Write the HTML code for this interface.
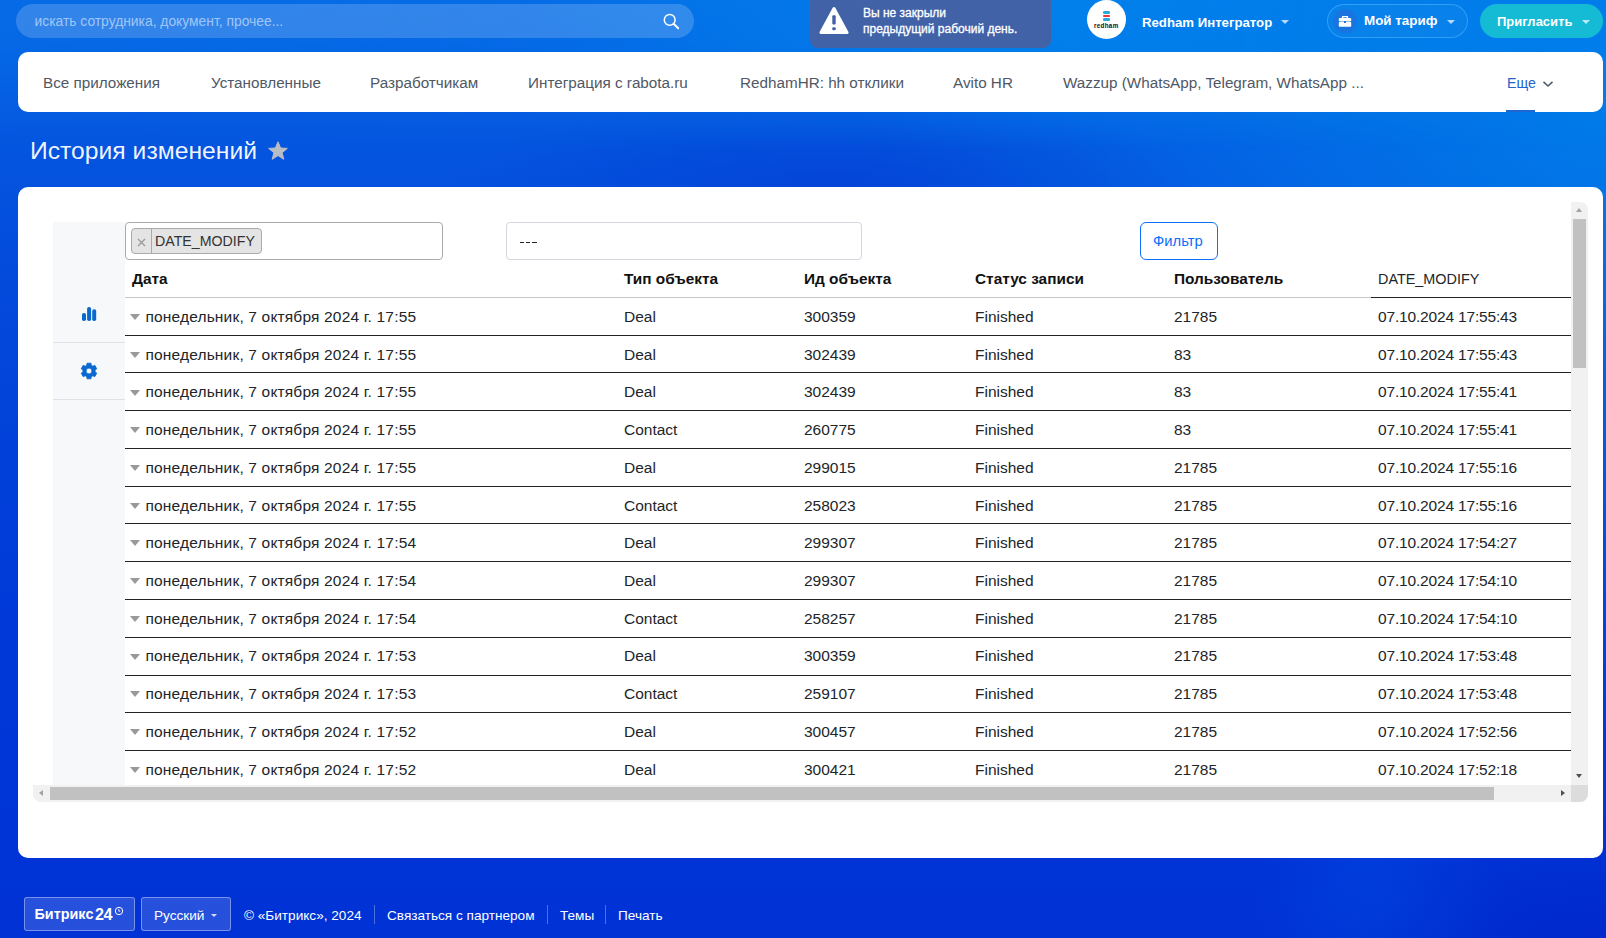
<!DOCTYPE html>
<html><head><meta charset="utf-8"><title>История изменений</title>
<style>
*{box-sizing:border-box;margin:0;padding:0}
html,body{width:1606px;height:938px;overflow:hidden}
body{font-family:"Liberation Sans",sans-serif;position:relative;background:#0550dc}
.t{position:absolute;white-space:nowrap}
.a{position:absolute}
</style></head><body>
<div class="a" style="left:0;top:0;width:1606px;height:938px;background:linear-gradient(180deg,#0a66e6 0px,#0556e0 130px,#0347da 330px,#0039d8 620px,#0032d6 938px)"></div>
<div class="a" style="left:0;top:0;width:1606px;height:938px;background:radial-gradient(ellipse 720px 640px at 1606px 120px,rgba(0,128,234,.85),rgba(0,128,234,.35) 55%,rgba(0,128,234,0) 100%)"></div>
<div class="a" style="left:0;top:0;width:1606px;height:938px;background:radial-gradient(ellipse 380px 90px at 830px 185px,rgba(0,50,205,.4),rgba(0,50,205,0))"></div>
<div class="a" style="left:0;top:0;width:1606px;height:938px;background:radial-gradient(ellipse 120px 120px at 1380px 900px,rgba(0,90,235,.3),rgba(0,90,235,0))"></div>
<div class="a" style="left:0;top:0;width:1606px;height:938px;background:radial-gradient(ellipse 300px 120px at 1606px 938px,rgba(0,25,190,.4),rgba(0,25,190,0))"></div>
<div class="a" style="left:0;top:0;width:1606px;height:160px;background:linear-gradient(90deg,rgba(0,118,230,.35) 0px,rgba(0,118,232,.42) 520px,rgba(0,134,236,.8) 1000px,rgba(0,128,236,.6) 1606px);-webkit-mask-image:linear-gradient(180deg,#000 0px,#000 45px,transparent 150px)"></div>
<div class="a" style="left:16px;top:4px;width:678px;height:34px;border-radius:17px;background:rgba(255,255,255,.18)"></div>
<div class="t" style="left:34.5px;top:15.08px;font-size:13.85px;line-height:13.85px;font-weight:normal;color:rgba(255,255,255,.55);">искать сотрудника, документ, прочее...</div>
<svg class="a" style="left:660px;top:11px" width="22" height="22" viewBox="0 0 22 22"><circle cx="9.7" cy="8.9" r="5.4" fill="none" stroke="#fff" stroke-width="1.5"/><line x1="13.6" y1="12.8" x2="18.2" y2="17.2" stroke="#fff" stroke-width="2" stroke-linecap="round"/></svg>
<div class="a" style="left:810px;top:-10px;width:241px;height:58px;border-radius:8px;background:#4262a8"></div>
<svg class="a" style="left:819px;top:6px" width="30" height="29" viewBox="0 0 30 29"><path d="M15 2.5 L28 26.5 L2 26.5 Z" fill="#fff" stroke="#fff" stroke-width="3" stroke-linejoin="round"/><rect x="13.3" y="9.3" width="3.4" height="9.2" rx="1" fill="#4262a8"/><rect x="13.3" y="21.2" width="3.4" height="3" rx="1" fill="#4262a8"/></svg>
<div class="t" style="left:863px;top:6.84px;font-size:12px;line-height:12px;font-weight:normal;color:#fff;-webkit-text-stroke:.3px #fff">Вы не закрыли</div>
<div class="t" style="left:863px;top:23.04px;font-size:12px;line-height:12px;font-weight:normal;color:#fff;-webkit-text-stroke:.3px #fff">предыдущий рабочий день.</div>
<div class="a" style="left:1087px;top:0px;width:39px;height:39px;border-radius:50%;background:#fff"></div>
<div class="a" style="left:1103px;top:11px;width:7px;height:2.6px;background:#2aa8e0;border-radius:1.3px"></div>
<div class="a" style="left:1103px;top:14.5px;width:7px;height:2.6px;background:#e8343c;border-radius:1.3px"></div>
<div class="a" style="left:1103px;top:18px;width:7px;height:2.6px;background:#2aa8e0;border-radius:1.3px"></div>
<div class="t" style="left:1094px;top:22.77px;font-size:6.3px;line-height:6.3px;font-weight:bold;color:#111;letter-spacing:.3px">redham</div>
<div class="t" style="left:1142px;top:15.63px;font-size:13.2px;line-height:13.2px;font-weight:bold;color:#fff;">Redham Интегратор</div>
<div class="a" style="left:1281px;top:20px;width:0;height:0;border-left:4px solid transparent;border-right:4px solid transparent;border-top:4px solid rgba(255,255,255,.7)"></div>
<div class="a" style="left:1327px;top:4px;width:141px;height:34px;border-radius:17px;border:1px solid rgba(90,200,255,.45);background:rgba(255,255,255,.03)"></div>
<div class="a" style="left:1333px;top:9px;width:24px;height:24px;border-radius:50%;background:rgba(55,95,205,.38)"></div>
<svg class="a" style="left:1338px;top:15px" width="14" height="13" viewBox="0 0 14 13"><path d="M4.6 3.4 V1.6 H9.4 V3.4" fill="none" stroke="#fff" stroke-width="1.4"/><rect x="0.8" y="3" width="12.4" height="3.4" rx="1" fill="#fff"/><rect x="0.8" y="7.1" width="12.4" height="4.7" rx="0.8" fill="#fff"/><rect x="6" y="6.1" width="2" height="1.8" rx=".5" fill="#1a6ad8"/></svg>
<div class="t" style="left:1364px;top:14.46px;font-size:13.4px;line-height:13.4px;font-weight:bold;color:#fff;">Мой тариф</div>
<div class="a" style="left:1447px;top:20px;width:0;height:0;border-left:4px solid transparent;border-right:4px solid transparent;border-top:4px solid rgba(255,255,255,.7)"></div>
<div class="a" style="left:1480px;top:4px;width:123px;height:34px;border-radius:17px;background:#15bbd5"></div>
<div class="t" style="left:1497px;top:14.80px;font-size:13px;line-height:13px;font-weight:bold;color:#fff;">Пригласить</div>
<div class="a" style="left:1582px;top:20px;width:0;height:0;border-left:4px solid transparent;border-right:4px solid transparent;border-top:4px solid rgba(255,255,255,.7)"></div>
<div class="a" style="left:18px;top:52px;width:1585px;height:60px;background:#fff;border-radius:10px"></div>
<div class="t" style="left:43px;top:75.09px;font-size:15.25px;line-height:15.25px;font-weight:normal;color:#4f5865;">Все приложения</div>
<div class="t" style="left:211px;top:75.09px;font-size:15.25px;line-height:15.25px;font-weight:normal;color:#4f5865;">Установленные</div>
<div class="t" style="left:370px;top:75.09px;font-size:15.25px;line-height:15.25px;font-weight:normal;color:#4f5865;">Разработчикам</div>
<div class="t" style="left:528px;top:75.09px;font-size:15.25px;line-height:15.25px;font-weight:normal;color:#4f5865;">Интеграция с rabota.ru</div>
<div class="t" style="left:740px;top:75.09px;font-size:15.25px;line-height:15.25px;font-weight:normal;color:#4f5865;">RedhamHR: hh отклики</div>
<div class="t" style="left:953px;top:75.09px;font-size:15.25px;line-height:15.25px;font-weight:normal;color:#4f5865;">Avito HR</div>
<div class="t" style="left:1063px;top:75.09px;font-size:15.25px;line-height:15.25px;font-weight:normal;color:#4f5865;">Wazzup (WhatsApp, Telegram, WhatsApp ...</div>
<div class="t" style="left:1507px;top:75.98px;font-size:14.2px;line-height:14.2px;font-weight:normal;color:#2264c8;">Еще</div>
<svg class="a" style="left:1542px;top:80px" width="12" height="8" viewBox="0 0 12 8"><path d="M1.5 1.8 L6 6 L10.5 1.8" fill="none" stroke="#525c69" stroke-width="1.6"/></svg>
<div class="a" style="left:1506px;top:110px;width:29px;height:2px;background:#2066d0"></div>
<div class="t" style="left:30px;top:138.69px;font-size:24.7px;line-height:24.7px;font-weight:normal;color:rgba(255,255,255,.94);">История изменений</div>
<svg class="a" style="left:267px;top:141px" width="22" height="20" viewBox="0 0 22 20"><path d="M11 0.8 L13.6 7 L20.3 7.4 L15.1 11.7 L16.8 18.3 L11 14.6 L5.2 18.3 L6.9 11.7 L1.7 7.4 L8.4 7 Z" fill="#b9bec6" stroke="#b9bec6" stroke-width="1" stroke-linejoin="round"/></svg>
<div class="a" style="left:18px;top:187px;width:1585px;height:671px;background:#fff;border-radius:10px"></div>
<div class="a" style="left:53px;top:222px;width:72px;height:563px;background:#f7f8fa"></div>
<div class="a" style="left:53px;top:342px;width:72px;height:1px;background:#dfe2e6"></div>
<div class="a" style="left:53px;top:399px;width:72px;height:1px;background:#dfe2e6"></div>
<svg class="a" style="left:81px;top:306px" width="17" height="16" viewBox="0 0 17 16"><rect x="1" y="7" width="4" height="8" rx="1.8" fill="#0a69d0"/><rect x="6.1" y="1" width="4" height="14" rx="1.8" fill="#0a69d0"/><rect x="11.2" y="3.2" width="4" height="11.8" rx="1.8" fill="#0a69d0"/></svg>
<svg class="a" style="left:80px;top:362px" width="18" height="18" viewBox="0 0 18 18"><path fill-rule="evenodd" d="M7.04,1.14 L10.96,1.14 L11.29,3.34 L12.76,4.19 L14.83,3.37 L16.79,6.77 L15.04,8.15 L15.04,9.85 L16.79,11.23 L14.83,14.63 L12.76,13.81 L11.29,14.66 L10.96,16.86 L7.04,16.86 L6.71,14.66 L5.24,13.81 L3.17,14.63 L1.21,11.23 L2.96,9.85 L2.96,8.15 L1.21,6.77 L3.17,3.37 L5.24,4.19 L6.71,3.34 Z M9 6.1 A2.9 2.9 0 1 0 9 11.9 A2.9 2.9 0 1 0 9 6.1 Z" fill="#0a69d0" stroke="#0a69d0" stroke-width="0.8" stroke-linejoin="round"/></svg>
<div class="a" style="left:125px;top:222px;width:318px;height:38px;border:1px solid #aaa;border-radius:4px;background:#fff"></div>
<div class="a" style="left:131px;top:228px;width:131px;height:26px;border:1px solid #aaa;border-radius:4px;background:#e4e4e4"></div>
<div class="a" style="left:151px;top:229px;width:1px;height:24px;background:#aaa"></div>
<svg class="a" style="left:137px;top:238px" width="9" height="9" viewBox="0 0 9 9"><path d="M1 1 L8 8 M8 1 L1 8" stroke="#999" stroke-width="1.3"/></svg>
<div class="t" style="left:155px;top:234.48px;font-size:14.2px;line-height:14.2px;font-weight:normal;color:#333;">DATE_MODIFY</div>
<div class="a" style="left:506px;top:222px;width:356px;height:38px;border:1px solid #d3d8de;border-radius:4px;background:#fff"></div>
<div class="a" style="left:519.5px;top:242px;width:4.5px;height:1.3px;background:#212529"></div>
<div class="a" style="left:525.8px;top:242px;width:4.5px;height:1.3px;background:#212529"></div>
<div class="a" style="left:532.1px;top:242px;width:4.5px;height:1.3px;background:#212529"></div>
<div class="a" style="left:1140px;top:222px;width:78px;height:38px;border:1px solid #0d6efd;border-radius:6px;background:#fff"></div>
<div class="t" style="left:1153px;top:234.27px;font-size:14.8px;line-height:14.8px;font-weight:normal;color:#0d6efd;">Фильтр</div>
<div class="a" style="left:125px;top:297px;width:1246px;height:1px;background:#c8c8c8"></div>
<div class="a" style="left:1371px;top:297px;width:200px;height:1px;background:#222"></div>
<div class="t" style="left:132px;top:270.96px;font-size:15.4px;line-height:15.4px;font-weight:bold;color:#111;">Дата</div>
<div class="t" style="left:624px;top:270.96px;font-size:15.4px;line-height:15.4px;font-weight:bold;color:#111;">Тип объекта</div>
<div class="t" style="left:804px;top:270.96px;font-size:15.4px;line-height:15.4px;font-weight:bold;color:#111;">Ид объекта</div>
<div class="t" style="left:975px;top:270.96px;font-size:15.4px;line-height:15.4px;font-weight:bold;color:#111;">Статус записи</div>
<div class="t" style="left:1174px;top:270.96px;font-size:15.4px;line-height:15.4px;font-weight:bold;color:#111;">Пользователь</div>
<div class="t" style="left:1378px;top:271.81px;font-size:14.4px;line-height:14.4px;font-weight:normal;color:#212529;">DATE_MODIFY</div>
<div class="a" style="left:0;top:298px;width:1571px;height:487px;overflow:hidden">
<div class="a" style="left:125px;top:37px;width:1446px;height:1px;background:#222"></div>
<div class="a" style="left:130px;top:16.0px;width:0;height:0;border-left:5.3px solid transparent;border-right:5.3px solid transparent;border-top:6px solid #999"></div>
<div class="t" style="left:145.4px;top:10.88px;font-size:15.5px;line-height:15.5px;font-weight:normal;color:#212529;letter-spacing:.17px">понедельник, 7 октября 2024 г. 17:55</div>
<div class="t" style="left:624px;top:10.88px;font-size:15.5px;line-height:15.5px;font-weight:normal;color:#212529;">Deal</div>
<div class="t" style="left:804px;top:10.88px;font-size:15.5px;line-height:15.5px;font-weight:normal;color:#212529;">300359</div>
<div class="t" style="left:975px;top:10.88px;font-size:15.5px;line-height:15.5px;font-weight:normal;color:#212529;">Finished</div>
<div class="t" style="left:1174px;top:10.88px;font-size:15.5px;line-height:15.5px;font-weight:normal;color:#212529;">21785</div>
<div class="t" style="left:1378px;top:10.88px;font-size:15.5px;line-height:15.5px;font-weight:normal;color:#212529;letter-spacing:-.17px">07.10.2024 17:55:43</div>
<div class="a" style="left:125px;top:74px;width:1446px;height:1px;background:#222"></div>
<div class="a" style="left:130px;top:53.7px;width:0;height:0;border-left:5.3px solid transparent;border-right:5.3px solid transparent;border-top:6px solid #999"></div>
<div class="t" style="left:145.4px;top:48.61px;font-size:15.5px;line-height:15.5px;font-weight:normal;color:#212529;letter-spacing:.17px">понедельник, 7 октября 2024 г. 17:55</div>
<div class="t" style="left:624px;top:48.61px;font-size:15.5px;line-height:15.5px;font-weight:normal;color:#212529;">Deal</div>
<div class="t" style="left:804px;top:48.61px;font-size:15.5px;line-height:15.5px;font-weight:normal;color:#212529;">302439</div>
<div class="t" style="left:975px;top:48.61px;font-size:15.5px;line-height:15.5px;font-weight:normal;color:#212529;">Finished</div>
<div class="t" style="left:1174px;top:48.61px;font-size:15.5px;line-height:15.5px;font-weight:normal;color:#212529;">83</div>
<div class="t" style="left:1378px;top:48.61px;font-size:15.5px;line-height:15.5px;font-weight:normal;color:#212529;letter-spacing:-.17px">07.10.2024 17:55:43</div>
<div class="a" style="left:125px;top:112px;width:1446px;height:1px;background:#222"></div>
<div class="a" style="left:130px;top:91.5px;width:0;height:0;border-left:5.3px solid transparent;border-right:5.3px solid transparent;border-top:6px solid #999"></div>
<div class="t" style="left:145.4px;top:86.34px;font-size:15.5px;line-height:15.5px;font-weight:normal;color:#212529;letter-spacing:.17px">понедельник, 7 октября 2024 г. 17:55</div>
<div class="t" style="left:624px;top:86.34px;font-size:15.5px;line-height:15.5px;font-weight:normal;color:#212529;">Deal</div>
<div class="t" style="left:804px;top:86.34px;font-size:15.5px;line-height:15.5px;font-weight:normal;color:#212529;">302439</div>
<div class="t" style="left:975px;top:86.34px;font-size:15.5px;line-height:15.5px;font-weight:normal;color:#212529;">Finished</div>
<div class="t" style="left:1174px;top:86.34px;font-size:15.5px;line-height:15.5px;font-weight:normal;color:#212529;">83</div>
<div class="t" style="left:1378px;top:86.34px;font-size:15.5px;line-height:15.5px;font-weight:normal;color:#212529;letter-spacing:-.17px">07.10.2024 17:55:41</div>
<div class="a" style="left:125px;top:150px;width:1446px;height:1px;background:#222"></div>
<div class="a" style="left:130px;top:129.2px;width:0;height:0;border-left:5.3px solid transparent;border-right:5.3px solid transparent;border-top:6px solid #999"></div>
<div class="t" style="left:145.4px;top:124.07px;font-size:15.5px;line-height:15.5px;font-weight:normal;color:#212529;letter-spacing:.17px">понедельник, 7 октября 2024 г. 17:55</div>
<div class="t" style="left:624px;top:124.07px;font-size:15.5px;line-height:15.5px;font-weight:normal;color:#212529;">Contact</div>
<div class="t" style="left:804px;top:124.07px;font-size:15.5px;line-height:15.5px;font-weight:normal;color:#212529;">260775</div>
<div class="t" style="left:975px;top:124.07px;font-size:15.5px;line-height:15.5px;font-weight:normal;color:#212529;">Finished</div>
<div class="t" style="left:1174px;top:124.07px;font-size:15.5px;line-height:15.5px;font-weight:normal;color:#212529;">83</div>
<div class="t" style="left:1378px;top:124.07px;font-size:15.5px;line-height:15.5px;font-weight:normal;color:#212529;letter-spacing:-.17px">07.10.2024 17:55:41</div>
<div class="a" style="left:125px;top:188px;width:1446px;height:1px;background:#222"></div>
<div class="a" style="left:130px;top:166.9px;width:0;height:0;border-left:5.3px solid transparent;border-right:5.3px solid transparent;border-top:6px solid #999"></div>
<div class="t" style="left:145.4px;top:161.80px;font-size:15.5px;line-height:15.5px;font-weight:normal;color:#212529;letter-spacing:.17px">понедельник, 7 октября 2024 г. 17:55</div>
<div class="t" style="left:624px;top:161.80px;font-size:15.5px;line-height:15.5px;font-weight:normal;color:#212529;">Deal</div>
<div class="t" style="left:804px;top:161.80px;font-size:15.5px;line-height:15.5px;font-weight:normal;color:#212529;">299015</div>
<div class="t" style="left:975px;top:161.80px;font-size:15.5px;line-height:15.5px;font-weight:normal;color:#212529;">Finished</div>
<div class="t" style="left:1174px;top:161.80px;font-size:15.5px;line-height:15.5px;font-weight:normal;color:#212529;">21785</div>
<div class="t" style="left:1378px;top:161.80px;font-size:15.5px;line-height:15.5px;font-weight:normal;color:#212529;letter-spacing:-.17px">07.10.2024 17:55:16</div>
<div class="a" style="left:125px;top:225px;width:1446px;height:1px;background:#222"></div>
<div class="a" style="left:130px;top:204.6px;width:0;height:0;border-left:5.3px solid transparent;border-right:5.3px solid transparent;border-top:6px solid #999"></div>
<div class="t" style="left:145.4px;top:199.53px;font-size:15.5px;line-height:15.5px;font-weight:normal;color:#212529;letter-spacing:.17px">понедельник, 7 октября 2024 г. 17:55</div>
<div class="t" style="left:624px;top:199.53px;font-size:15.5px;line-height:15.5px;font-weight:normal;color:#212529;">Contact</div>
<div class="t" style="left:804px;top:199.53px;font-size:15.5px;line-height:15.5px;font-weight:normal;color:#212529;">258023</div>
<div class="t" style="left:975px;top:199.53px;font-size:15.5px;line-height:15.5px;font-weight:normal;color:#212529;">Finished</div>
<div class="t" style="left:1174px;top:199.53px;font-size:15.5px;line-height:15.5px;font-weight:normal;color:#212529;">21785</div>
<div class="t" style="left:1378px;top:199.53px;font-size:15.5px;line-height:15.5px;font-weight:normal;color:#212529;letter-spacing:-.17px">07.10.2024 17:55:16</div>
<div class="a" style="left:125px;top:263px;width:1446px;height:1px;background:#222"></div>
<div class="a" style="left:130px;top:242.4px;width:0;height:0;border-left:5.3px solid transparent;border-right:5.3px solid transparent;border-top:6px solid #999"></div>
<div class="t" style="left:145.4px;top:237.26px;font-size:15.5px;line-height:15.5px;font-weight:normal;color:#212529;letter-spacing:.17px">понедельник, 7 октября 2024 г. 17:54</div>
<div class="t" style="left:624px;top:237.26px;font-size:15.5px;line-height:15.5px;font-weight:normal;color:#212529;">Deal</div>
<div class="t" style="left:804px;top:237.26px;font-size:15.5px;line-height:15.5px;font-weight:normal;color:#212529;">299307</div>
<div class="t" style="left:975px;top:237.26px;font-size:15.5px;line-height:15.5px;font-weight:normal;color:#212529;">Finished</div>
<div class="t" style="left:1174px;top:237.26px;font-size:15.5px;line-height:15.5px;font-weight:normal;color:#212529;">21785</div>
<div class="t" style="left:1378px;top:237.26px;font-size:15.5px;line-height:15.5px;font-weight:normal;color:#212529;letter-spacing:-.17px">07.10.2024 17:54:27</div>
<div class="a" style="left:125px;top:301px;width:1446px;height:1px;background:#222"></div>
<div class="a" style="left:130px;top:280.1px;width:0;height:0;border-left:5.3px solid transparent;border-right:5.3px solid transparent;border-top:6px solid #999"></div>
<div class="t" style="left:145.4px;top:274.99px;font-size:15.5px;line-height:15.5px;font-weight:normal;color:#212529;letter-spacing:.17px">понедельник, 7 октября 2024 г. 17:54</div>
<div class="t" style="left:624px;top:274.99px;font-size:15.5px;line-height:15.5px;font-weight:normal;color:#212529;">Deal</div>
<div class="t" style="left:804px;top:274.99px;font-size:15.5px;line-height:15.5px;font-weight:normal;color:#212529;">299307</div>
<div class="t" style="left:975px;top:274.99px;font-size:15.5px;line-height:15.5px;font-weight:normal;color:#212529;">Finished</div>
<div class="t" style="left:1174px;top:274.99px;font-size:15.5px;line-height:15.5px;font-weight:normal;color:#212529;">21785</div>
<div class="t" style="left:1378px;top:274.99px;font-size:15.5px;line-height:15.5px;font-weight:normal;color:#212529;letter-spacing:-.17px">07.10.2024 17:54:10</div>
<div class="a" style="left:125px;top:339px;width:1446px;height:1px;background:#222"></div>
<div class="a" style="left:130px;top:317.8px;width:0;height:0;border-left:5.3px solid transparent;border-right:5.3px solid transparent;border-top:6px solid #999"></div>
<div class="t" style="left:145.4px;top:312.72px;font-size:15.5px;line-height:15.5px;font-weight:normal;color:#212529;letter-spacing:.17px">понедельник, 7 октября 2024 г. 17:54</div>
<div class="t" style="left:624px;top:312.72px;font-size:15.5px;line-height:15.5px;font-weight:normal;color:#212529;">Contact</div>
<div class="t" style="left:804px;top:312.72px;font-size:15.5px;line-height:15.5px;font-weight:normal;color:#212529;">258257</div>
<div class="t" style="left:975px;top:312.72px;font-size:15.5px;line-height:15.5px;font-weight:normal;color:#212529;">Finished</div>
<div class="t" style="left:1174px;top:312.72px;font-size:15.5px;line-height:15.5px;font-weight:normal;color:#212529;">21785</div>
<div class="t" style="left:1378px;top:312.72px;font-size:15.5px;line-height:15.5px;font-weight:normal;color:#212529;letter-spacing:-.17px">07.10.2024 17:54:10</div>
<div class="a" style="left:125px;top:377px;width:1446px;height:1px;background:#222"></div>
<div class="a" style="left:130px;top:355.6px;width:0;height:0;border-left:5.3px solid transparent;border-right:5.3px solid transparent;border-top:6px solid #999"></div>
<div class="t" style="left:145.4px;top:350.45px;font-size:15.5px;line-height:15.5px;font-weight:normal;color:#212529;letter-spacing:.17px">понедельник, 7 октября 2024 г. 17:53</div>
<div class="t" style="left:624px;top:350.45px;font-size:15.5px;line-height:15.5px;font-weight:normal;color:#212529;">Deal</div>
<div class="t" style="left:804px;top:350.45px;font-size:15.5px;line-height:15.5px;font-weight:normal;color:#212529;">300359</div>
<div class="t" style="left:975px;top:350.45px;font-size:15.5px;line-height:15.5px;font-weight:normal;color:#212529;">Finished</div>
<div class="t" style="left:1174px;top:350.45px;font-size:15.5px;line-height:15.5px;font-weight:normal;color:#212529;">21785</div>
<div class="t" style="left:1378px;top:350.45px;font-size:15.5px;line-height:15.5px;font-weight:normal;color:#212529;letter-spacing:-.17px">07.10.2024 17:53:48</div>
<div class="a" style="left:125px;top:414px;width:1446px;height:1px;background:#222"></div>
<div class="a" style="left:130px;top:393.3px;width:0;height:0;border-left:5.3px solid transparent;border-right:5.3px solid transparent;border-top:6px solid #999"></div>
<div class="t" style="left:145.4px;top:388.18px;font-size:15.5px;line-height:15.5px;font-weight:normal;color:#212529;letter-spacing:.17px">понедельник, 7 октября 2024 г. 17:53</div>
<div class="t" style="left:624px;top:388.18px;font-size:15.5px;line-height:15.5px;font-weight:normal;color:#212529;">Contact</div>
<div class="t" style="left:804px;top:388.18px;font-size:15.5px;line-height:15.5px;font-weight:normal;color:#212529;">259107</div>
<div class="t" style="left:975px;top:388.18px;font-size:15.5px;line-height:15.5px;font-weight:normal;color:#212529;">Finished</div>
<div class="t" style="left:1174px;top:388.18px;font-size:15.5px;line-height:15.5px;font-weight:normal;color:#212529;">21785</div>
<div class="t" style="left:1378px;top:388.18px;font-size:15.5px;line-height:15.5px;font-weight:normal;color:#212529;letter-spacing:-.17px">07.10.2024 17:53:48</div>
<div class="a" style="left:125px;top:452px;width:1446px;height:1px;background:#222"></div>
<div class="a" style="left:130px;top:431.0px;width:0;height:0;border-left:5.3px solid transparent;border-right:5.3px solid transparent;border-top:6px solid #999"></div>
<div class="t" style="left:145.4px;top:425.91px;font-size:15.5px;line-height:15.5px;font-weight:normal;color:#212529;letter-spacing:.17px">понедельник, 7 октября 2024 г. 17:52</div>
<div class="t" style="left:624px;top:425.91px;font-size:15.5px;line-height:15.5px;font-weight:normal;color:#212529;">Deal</div>
<div class="t" style="left:804px;top:425.91px;font-size:15.5px;line-height:15.5px;font-weight:normal;color:#212529;">300457</div>
<div class="t" style="left:975px;top:425.91px;font-size:15.5px;line-height:15.5px;font-weight:normal;color:#212529;">Finished</div>
<div class="t" style="left:1174px;top:425.91px;font-size:15.5px;line-height:15.5px;font-weight:normal;color:#212529;">21785</div>
<div class="t" style="left:1378px;top:425.91px;font-size:15.5px;line-height:15.5px;font-weight:normal;color:#212529;letter-spacing:-.17px">07.10.2024 17:52:56</div>
<div class="a" style="left:125px;top:490px;width:1446px;height:1px;background:#222"></div>
<div class="a" style="left:130px;top:468.8px;width:0;height:0;border-left:5.3px solid transparent;border-right:5.3px solid transparent;border-top:6px solid #999"></div>
<div class="t" style="left:145.4px;top:463.64px;font-size:15.5px;line-height:15.5px;font-weight:normal;color:#212529;letter-spacing:.17px">понедельник, 7 октября 2024 г. 17:52</div>
<div class="t" style="left:624px;top:463.64px;font-size:15.5px;line-height:15.5px;font-weight:normal;color:#212529;">Deal</div>
<div class="t" style="left:804px;top:463.64px;font-size:15.5px;line-height:15.5px;font-weight:normal;color:#212529;">300421</div>
<div class="t" style="left:975px;top:463.64px;font-size:15.5px;line-height:15.5px;font-weight:normal;color:#212529;">Finished</div>
<div class="t" style="left:1174px;top:463.64px;font-size:15.5px;line-height:15.5px;font-weight:normal;color:#212529;">21785</div>
<div class="t" style="left:1378px;top:463.64px;font-size:15.5px;line-height:15.5px;font-weight:normal;color:#212529;letter-spacing:-.17px">07.10.2024 17:52:18</div>
</div>
<div class="a" style="left:1571px;top:202px;width:17px;height:600px;background:#f1f1f1;border-radius:0 8px 8px 0"></div>
<div class="a" style="left:1573px;top:219px;width:13px;height:149px;background:#c1c1c1"></div>
<div class="a" style="left:1576px;top:208px;width:0;height:0;border-left:3.5px solid transparent;border-right:3.5px solid transparent;border-bottom:4px solid #a3a3a3"></div>
<div class="a" style="left:1576px;top:774px;width:0;height:0;border-left:3.5px solid transparent;border-right:3.5px solid transparent;border-top:4px solid #505050"></div>
<div class="a" style="left:33px;top:785px;width:1538px;height:17px;background:#f1f1f1;border-radius:0 0 0 8px"></div>
<div class="a" style="left:1571px;top:785px;width:17px;height:17px;background:#dcdcdc;border-radius:0 0 8px 0"></div>
<div class="a" style="left:50px;top:787px;width:1444px;height:13px;background:#c1c1c1"></div>
<div class="a" style="left:39px;top:790px;width:0;height:0;border-top:3.5px solid transparent;border-bottom:3.5px solid transparent;border-right:4px solid #a3a3a3"></div>
<div class="a" style="left:1561px;top:790px;width:0;height:0;border-top:3.5px solid transparent;border-bottom:3.5px solid transparent;border-left:4px solid #505050"></div>
<div class="a" style="left:24px;top:897px;width:111px;height:34px;border:1px solid rgba(255,255,255,.38);border-radius:3px;background:rgba(255,255,255,.15)"></div>
<div class="a" style="left:141px;top:897px;width:90px;height:34px;border:1px solid rgba(255,255,255,.38);border-radius:3px;background:rgba(255,255,255,.15)"></div>
<div class="t" style="left:34.5px;top:907.31px;font-size:14.4px;line-height:14.4px;font-weight:bold;color:#fff;">Битрикс</div>
<div class="t" style="left:95px;top:905.79px;font-size:16.2px;line-height:16.2px;font-weight:bold;color:#fff;letter-spacing:-.6px">24</div>
<svg class="a" style="left:114px;top:906px" width="10" height="10" viewBox="0 0 10 10"><circle cx="5" cy="5" r="3.7" fill="none" stroke="#fff" stroke-width="1"/><path d="M4.8 3 V5.2 H6.4" fill="none" stroke="#fff" stroke-width="0.9"/></svg>
<div class="t" style="left:154px;top:908.79px;font-size:13.6px;line-height:13.6px;font-weight:normal;color:#fff;">Русский</div>
<div class="a" style="left:211px;top:914px;width:0;height:0;border-left:3px solid transparent;border-right:3px solid transparent;border-top:3px solid rgba(255,255,255,.8)"></div>
<div class="t" style="left:244px;top:908.79px;font-size:13.6px;line-height:13.6px;font-weight:normal;color:#fff;">© «Битрикс», 2024</div>
<div class="a" style="left:374px;top:905px;width:1px;height:19px;background:rgba(255,255,255,.3)"></div>
<div class="t" style="left:387px;top:908.79px;font-size:13.6px;line-height:13.6px;font-weight:normal;color:#fff;">Связаться с партнером</div>
<div class="a" style="left:547px;top:905px;width:1px;height:19px;background:rgba(255,255,255,.3)"></div>
<div class="t" style="left:560px;top:908.79px;font-size:13.6px;line-height:13.6px;font-weight:normal;color:#fff;">Темы</div>
<div class="a" style="left:605px;top:905px;width:1px;height:19px;background:rgba(255,255,255,.3)"></div>
<div class="t" style="left:618px;top:908.79px;font-size:13.6px;line-height:13.6px;font-weight:normal;color:#fff;">Печать</div>
</body></html>
